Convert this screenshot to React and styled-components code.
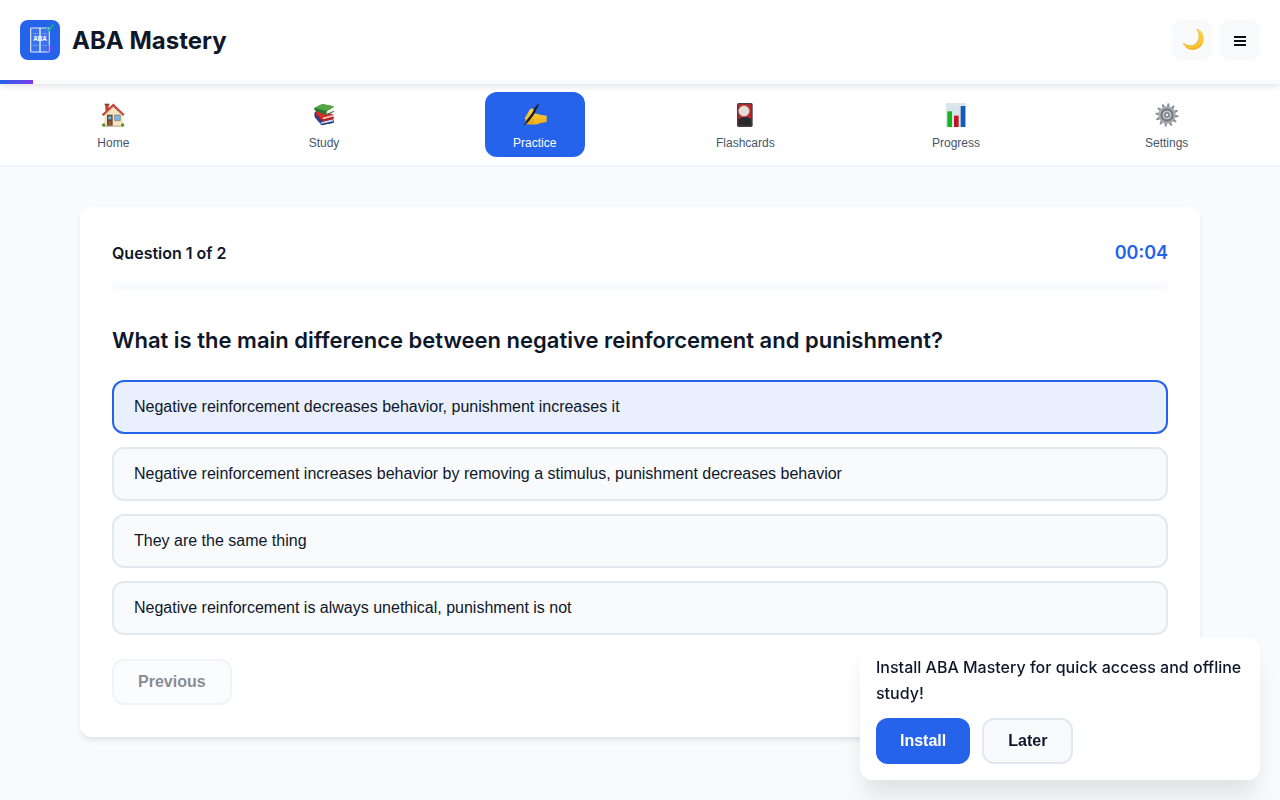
import React from "react";
import styled, { createGlobalStyle, css } from "styled-components";

const c = {
  blue: "#2563eb",
  violet: "#7c3aed",
  ink: "#0f172a",
  slate: "#475569",
  line: "#e2e8f0",
  softLine: "#eef2f8",
  surface: "#f8fafc",
};
const shadow = "0 4px 6px -1px rgba(0, 0, 0, 0.1)";
const sans = `"Liberation Sans", Arial, sans-serif`;

const GlobalStyle = createGlobalStyle`
  *, *::before, *::after { box-sizing: border-box; }
  body {
    margin: 0;
    background: ${c.surface};
    color: ${c.ink};
    font: 16px/26px Inter, sans-serif;
  }
  button { font-family: ${sans}; cursor: pointer; }
  svg { display: block; }
`;

const Header = styled.header`
  position: relative;
  z-index: 1;
  background: #fff;
  box-shadow: ${shadow};
`;
const HeaderRow = styled.div`
  display: flex;
  align-items: center;
  justify-content: space-between;
  padding: 20px;
`;
const Brand = styled.div`
  display: flex;
  align-items: center;
  gap: 12px;
`;
const Title = styled.h1`
  margin: 0;
  font-size: 24px;
  line-height: 39px;
  font-weight: 700;
`;
const Tools = styled.div`
  display: flex;
  gap: 8px;
`;
const ToolButton = styled.button`
  display: grid;
  place-items: center;
  width: 40px;
  height: 40px;
  padding: 0;
  border: 0;
  border-radius: 8px;
  background: ${c.surface};
`;
const PageProgress = styled.div`
  height: 4px;
  background: ${c.surface};
`;
const PageProgressFill = styled.div`
  height: 100%;
  background: linear-gradient(90deg, ${c.blue}, ${c.violet});
`;

const Nav = styled.nav`
  display: grid;
  grid-template-columns: repeat(6, 1fr);
  justify-items: center;
  padding: 8px;
  background: #fff;
  border-bottom: 2px solid ${c.softLine};
`;
const NavItem = styled.button`
  display: flex;
  flex-direction: column;
  align-items: center;
  gap: 6px;
  width: 100px;
  padding: 8px 8px 6px;
  border: 0;
  border-radius: 12px;
  background: ${(p) => (p.$active ? c.blue : "transparent")};
  color: ${(p) => (p.$active ? "#fff" : c.slate)};
`;
const NavIcon = styled.span`
  display: grid;
  place-items: center;
  height: 30px;
`;
const NavLabel = styled.span`
  font-size: 12px;
  line-height: 15px;
`;

const Main = styled.main`
  max-width: 1200px;
  margin: 0 auto;
  padding: 40px;
`;
const Card = styled.section`
  padding: 32px;
  border-radius: 12px;
  background: #fff;
  box-shadow: ${shadow};
`;
const QuizHeader = styled.div`
  display: flex;
  align-items: center;
  justify-content: space-between;
  margin-bottom: 16px;
  line-height: 28px;
  font-weight: 600;
`;
const Timer = styled.span`
  color: ${c.blue};
  font-size: 18px;
`;
const QuizProgress = styled.div`
  height: 8px;
  margin-bottom: 32px;
  border-radius: 4px;
  background: ${c.surface};
`;
const Question = styled.h2`
  margin: 0 0 22px;
  font-size: 22px;
  line-height: 35px;
  font-weight: 600;
`;
const Options = styled.div`
  display: flex;
  flex-direction: column;
  gap: 13px;
  margin-bottom: 24px;
`;
const Option = styled.button`
  padding: 16px 20px;
  border: 2px solid ${(p) => (p.$selected ? c.blue : c.line)};
  border-radius: 12px;
  background: ${(p) => (p.$selected ? "rgba(37, 99, 235, 0.1)" : c.surface)};
  color: ${c.ink};
  font-size: 16px;
  line-height: 18px;
  text-align: left;
`;
const ButtonRow = styled.div`
  display: flex;
  gap: 12px;
`;
const Button = styled.button`
  padding: 12px 24px;
  border-radius: 12px;
  font-size: 16px;
  line-height: 18px;
  font-weight: 700;
  ${(p) =>
    p.$primary
      ? css`
          border: 0;
          background: ${c.blue};
          color: #fff;
        `
      : css`
          border: 2px solid ${c.line};
          background: ${c.surface};
          color: ${c.ink};
        `}
  &:disabled {
    opacity: 0.5;
    cursor: not-allowed;
  }
`;

const Toast = styled.aside`
  position: fixed;
  z-index: 2;
  right: 20px;
  bottom: 20px;
  width: 400px;
  max-width: calc(100% - 40px);
  padding: 16px;
  border-radius: 12px;
  background: #fff;
  box-shadow: 0 20px 25px -5px rgba(0, 0, 0, 0.1);
`;
const ToastText = styled.p`
  margin: 0 0 12px;
  font-weight: 500;
`;

function Logo() {
  return (
    <svg width="40" height="40" viewBox="0 0 120 120" aria-hidden="true">
      <rect width="120" height="120" rx="24" fill={c.blue} />
      <rect x="32" y="24" width="56" height="72" rx="2" fill="#3b73ed" stroke="#dfe8fd" strokeWidth="3.5" />
      <path d="M60 24v72" stroke="#f3f6fe" strokeWidth="4" />
      <path d="M39 41h15M66 41h15M39 49h15M66 49h15M39 76h15M66 76h15" stroke="#8eb0f5" strokeWidth="2" />
      <circle cx="90" cy="87" r="11" fill={c.violet} opacity="0.4" />
      <text x="60" y="63" textAnchor="middle" fill="#fff" fontFamily="Liberation Sans, Arial, sans-serif" fontWeight="700" fontSize="19">ABA</text>
      <path d="M79 24l8 8 13-19" fill="none" stroke="#10b981" strokeWidth="5" />
    </svg>
  );
}

const Icon = ({ children, viewBox = "0 0 72 72" }) => (
  <svg width="24" height="24" viewBox={viewBox} aria-hidden="true">{children}</svg>
);

const MoonIcon = () => (
  <Icon viewBox="-3 3 72 72">
    <defs>
      <linearGradient id="moon" x1="0" y1="0" x2="0.6" y2="1">
        <stop offset="0" stopColor="#ffe36a" />
        <stop offset="1" stopColor="#f8c02c" />
      </linearGradient>
    </defs>
    <path d="M46 4C62 9 69 22 68 37C67 55 54 69 36 69C22 69 9 61 4 46C14 53 28 57 38 53C54 46 58 22 46 4Z" fill="url(#moon)" />
    <path d="M47 6C59 22 57 45 40 54C29 59 15 55 7 49" fill="none" stroke="#d8b878" strokeWidth="2" />
    <path d="M15 60C31 71 53 66 61 51" fill="none" stroke="#eaa91c" strokeWidth="3" opacity=".7" />
  </Icon>
);

const MenuIcon = () => (
  <svg width="12" height="14" viewBox="0 0 12 14" aria-hidden="true">
    <path d="M0 4h12M0 8h12M0 12h12" stroke="#0b0f18" strokeWidth="1.8" />
  </svg>
);

const HomeIcon = () => (
  <Icon>
    <path d="M13 4h10v18H13Z" fill="#b8432f" />
    <path d="M11 2h14v5H11Z" fill="#86402f" />
    <path d="M37 10L65 37V70H10V37Z" fill="#f5e3c0" />
    <path d="M7 38L37 10L67 38" fill="none" stroke="#8f4a3c" strokeWidth="3" />
    <path d="M4 36L37 5L69 36" fill="none" stroke="#cb3a31" strokeWidth="5" />
    <path d="M18 35h17v34H18Z" fill="#6f452f" />
    <path d="M22 40h9v9h-9Z" fill="#67bdea" />
    <path d="M22 54h9v13h-9Z" fill="#925d3d" />
    <path d="M41 36h17v17H41Z" fill="#6fb9ea" stroke="#8d7b6c" strokeWidth="2" />
    <path d="M8 68h56v3H8Z" fill="#bda78a" />
    <circle cx="8" cy="66" r="5" fill="#5d8b2e" />
    <circle cx="65" cy="66" r="5" fill="#5d8b2e" />
  </Icon>
);

const BooksIcon = () => (
  <Icon>
    <path d="M8 28L15 25L65 50V59L29 66L10 43Q5 36 8 28Z" fill="#233f93" />
    <path d="M27 58L63 48V57L29 63Z" fill="#c9cfe2" />
    <path d="M26 64L65 55V59L28 67L8 42V37Z" fill="#1b3278" />
    <path d="M11 24L46 26L64 35V49L31 55L13 36Z" fill="#d72d26" />
    <path d="M32 44L62 36V41L33 49Z" fill="#e9d6d4" />
    <path d="M31 50L65 42V47L31 55L14 37V32Z" fill="#b11e20" />
    <path d="M7 15L31 3L66 11L44 25V37L12 25Q5 21 7 15Z" fill="#2b7434" />
    <path d="M7 14L31 3L67 10L43 24Z" fill="#54a641" />
    <path d="M44 27L65 14L64 24L44 34Z" fill="#f1f0e9" />
    <path d="M43 35L66 25" stroke="#287336" strokeWidth="3" />
  </Icon>
);

const WritingIcon = () => (
  <Icon viewBox="2 0 72 72">
    <defs>
      <linearGradient id="hand" x1="0" y1="0" x2="0" y2="1">
        <stop offset="0" stopColor="#ffd34a" />
        <stop offset="1" stopColor="#f0ac14" />
      </linearGradient>
    </defs>
    <path d="M26 17C31 16 35 18 35 23L31 33C42 29 49 36 58 36L73 38V57C62 60 56 59 50 62C40 66 25 65 10 63C4 59 12 53 9 49C5 45 10 41 13 36L22 20Z" fill="url(#hand)" />
    <path d="M20 52L34 50M20 59L34 57" stroke="#d78b12" strokeWidth="2" strokeLinecap="round" />
    <path d="M47 3L37 14L29 31L11 54L4 68L17 58L34 36L42 20L50 5Z" fill="#181b20" />
  </Icon>
);

const FlashcardIcon = () => (
  <Icon>
    <rect x="12" y="0" width="47" height="72" rx="5" fill="#443f40" />
    <rect x="16" y="4" width="39" height="64" rx="2" fill="#bd292d" />
    <path d="M16 48Q35 36 55 47V68H16Z" fill="#292a2d" />
    <circle cx="33" cy="24" r="16" fill="#e4ddd5" stroke="#c8b7ac" strokeWidth="1.5" />
  </Icon>
);

const ChartIcon = () => (
  <Icon>
    <path d="M6 0h60v72H6Z" fill="#dce6ee" />
    <path d="M6 18h60M6 36h60M6 54h60M26 0v72M46 0v72" stroke="#cbd8e2" strokeWidth="1" />
    <path d="M10 25h14v47H10Z" fill="#13b51b" />
    <path d="M30 38h14v34H30Z" fill="#bd1822" />
    <path d="M50 9h14v63H50Z" fill="#155bbd" />
  </Icon>
);

const TEETH = Array.from({ length: 12 }, (_, i) => i * 30 + 7);
const GearIcon = () => (
  <Icon>
    {TEETH.map((angle) => (
      <path key={angle} d="M32 13L34 1H38L41 13Z" fill="#858b92" transform={`rotate(${angle} 36 36)`} />
    ))}
    <circle cx="36" cy="36" r="23" fill="#777d84" stroke="#a8adb3" strokeWidth="6" />
    <circle cx="36" cy="36" r="12" fill="#a6aaaf" stroke="#c6cbd0" strokeWidth="3" />
    <circle cx="36" cy="36" r="6" fill="#eceff2" stroke="#62676e" strokeWidth="3" />
  </Icon>
);

const NAV = [
  ["Home", HomeIcon],
  ["Study", BooksIcon],
  ["Practice", WritingIcon],
  ["Flashcards", FlashcardIcon],
  ["Progress", ChartIcon],
  ["Settings", GearIcon],
];

const ANSWERS = [
  "Negative reinforcement decreases behavior, punishment increases it",
  "Negative reinforcement increases behavior by removing a stimulus, punishment decreases behavior",
  "They are the same thing",
  "Negative reinforcement is always unethical, punishment is not",
];

export default function App() {
  const [selected, setSelected] = React.useState(0);
  const [page, setPage] = React.useState("Practice");
  const studied = 2.6;

  return (
    <>
      <GlobalStyle />
      <Header>
        <HeaderRow>
          <Brand>
            <Logo />
            <Title>ABA Mastery</Title>
          </Brand>
          <Tools>
            <ToolButton aria-label="Toggle dark mode"><MoonIcon /></ToolButton>
            <ToolButton aria-label="Menu"><MenuIcon /></ToolButton>
          </Tools>
        </HeaderRow>
        <PageProgress>
          <PageProgressFill style={{ width: `${studied}%` }} />
        </PageProgress>
      </Header>
      <Nav>
        {NAV.map(([label, Glyph]) => (
          <NavItem key={label} $active={page === label} onClick={() => setPage(label)}>
            <NavIcon><Glyph /></NavIcon>
            <NavLabel>{label}</NavLabel>
          </NavItem>
        ))}
      </Nav>
      <Main>
        <Card>
          <QuizHeader>
            <span>Question 1 of 2</span>
            <Timer>00:04</Timer>
          </QuizHeader>
          <QuizProgress />
          <Question>What is the main difference between negative reinforcement and punishment?</Question>
          <Options>
            {ANSWERS.map((answer, i) => (
              <Option key={answer} $selected={i === selected} aria-pressed={i === selected} onClick={() => setSelected(i)}>
                {answer}
              </Option>
            ))}
          </Options>
          <ButtonRow>
            <Button disabled>Previous</Button>
          </ButtonRow>
        </Card>
      </Main>
      <Toast>
        <ToastText>Install ABA Mastery for quick access and offline study!</ToastText>
        <ButtonRow>
          <Button $primary>Install</Button>
          <Button>Later</Button>
        </ButtonRow>
      </Toast>
    </>
  );
}
